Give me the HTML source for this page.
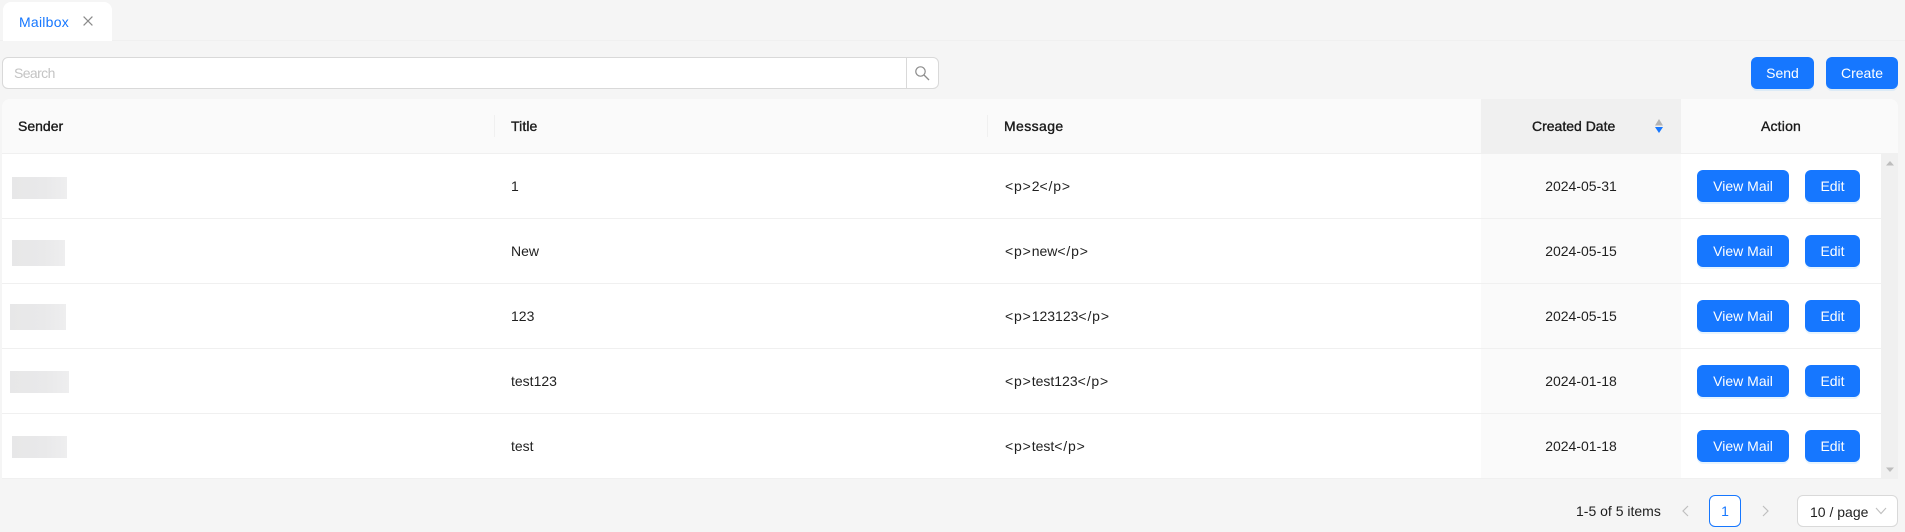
<!DOCTYPE html>
<html><head><meta charset="utf-8"><style>
html,body{margin:0;padding:0}
body{width:1905px;height:532px;position:relative;overflow:hidden;background:#f5f5f5;font-family:"Liberation Sans",sans-serif;font-size:14px;color:rgba(0,0,0,.88)}
.a{position:absolute;box-sizing:border-box}
.t{position:absolute;white-space:nowrap;line-height:22px;height:22px}
.c{transform:translateX(-50%)}
.h{-webkit-text-stroke:.35px rgba(0,0,0,.88)}
.g{letter-spacing:.85px}
.b{position:absolute;box-sizing:border-box;background:#1677ff;color:#fff;border-radius:6px;height:32px;line-height:32px;text-align:center;box-shadow:0 2px 0 rgba(5,145,255,.1)}
.bl{position:absolute;background:linear-gradient(90deg,#e7e7e8,#e9e9ea 60%,#eeeeef)}
.ln{position:absolute;left:2px;height:1px;background:#f0f0f0}
.dv{position:absolute;top:115px;width:1px;height:22px;background:#f0f0f0}
</style></head><body>
<div class="a" style="left:0;top:40px;width:1905px;height:1px;background:#f0f0f0"></div>
<div class="a" style="left:3px;top:2px;width:109px;height:39px;background:#fff;border-radius:8px 8px 0 0"></div>
<div class="t" style="left:19px;top:11px;color:#1677ff;letter-spacing:.25px">Mailbox</div>
<svg class="a" style="left:83px;top:16px" width="10" height="10" viewBox="0 0 10 10"><path d="M.6.6l8.800 8.800M9.400.6L.6 9.400" stroke="#8a8a8a" stroke-width="1.2" fill="none"/></svg>

<div class="a" style="left:2px;top:57px;width:937px;height:32px;background:#fff;border:1px solid #d9d9d9;border-radius:6px"></div>
<div class="a" style="left:906px;top:57px;width:1px;height:32px;background:#d9d9d9"></div>
<div class="t" style="left:14px;top:62px;color:#c4c4c4;letter-spacing:-.6px">Search</div>
<svg class="a" style="left:915px;top:66px" width="15" height="15" viewBox="0 0 15 15"><circle cx="5.500" cy="5.500" r="4.700" stroke="#8c8c8c" stroke-width="1.200" fill="none"/><path d="M9 9l5 5" stroke="#8c8c8c" stroke-width="1.300" fill="none"/></svg>

<div class="b" style="left:1751px;top:57px;width:63px">Send</div>
<div class="b" style="left:1826px;top:57px;width:72px">Create</div>

<div class="a" style="left:2px;top:99px;width:1896px;height:379px;background:#fff;border-radius:8px 8px 0 0;overflow:hidden">
  <div class="a" style="left:0;top:0;width:1896px;height:54px;background:#fafafa"></div>
  <div class="a" style="left:1479px;top:0;width:200px;height:54px;background:#f0f0f0"></div>
  <div class="a" style="left:1479px;top:54px;width:200px;height:325px;background:#fafafa"></div>
  <div class="a" style="left:1879px;top:54px;width:17px;height:325px;background:#f0f0f0"></div>
</div>
<div class="ln" style="top:153px;width:1896px"></div>
<div class="ln" style="top:218px;width:1879px"></div>
<div class="ln" style="top:283px;width:1879px"></div>
<div class="ln" style="top:348px;width:1879px"></div>
<div class="ln" style="top:413px;width:1879px"></div>
<div class="ln" style="top:478px;width:1896px"></div>
<div class="dv" style="left:494px"></div>
<div class="dv" style="left:987px"></div>

<div class="t h" style="left:18px;top:115px">Sender</div>
<div class="t h" style="left:511px;top:115px;letter-spacing:.1px">Title</div>
<div class="t h" style="left:1004px;top:115px;letter-spacing:.4px">Message</div>
<div class="t h" style="left:1532px;top:115px">Created Date</div>
<div class="t h c" style="left:1781px;top:115px;letter-spacing:.2px">Action</div>
<svg class="a" style="left:1654px;top:119px" width="10" height="15" viewBox="0 0 10 15"><path d="M5 0L9 6.500H1z" fill="#b3b3b3"/><path d="M5 14L9 8H1z" fill="#1677ff"/></svg>

<svg class="a" style="left:1884px;top:160px" width="12" height="7" viewBox="0 0 12 7"><path d="M6 1l4 4.500H2z" fill="#bdbdbd"/></svg>
<svg class="a" style="left:1884px;top:466px" width="12" height="7" viewBox="0 0 12 7"><path d="M6 6l4-4.500H2z" fill="#bdbdbd"/></svg>

<div class="bl" style="left:12px;top:177px;width:55px;height:22px"></div>
<div class="t" style="left:511px;top:175px">1</div>
<div class="t" style="left:1005px;top:175px"><span class="g">&lt;p&gt;</span>2<span class="g">&lt;/p&gt;</span></div>
<div class="t c" style="left:1581px;top:175px">2024-05-31</div>
<div class="b" style="left:1697px;top:170px;width:92px">View Mail</div>
<div class="b" style="left:1805px;top:170px;width:55px">Edit</div>

<div class="bl" style="left:12px;top:240px;width:53px;height:26px"></div>
<div class="t" style="left:511px;top:240px">New</div>
<div class="t" style="left:1005px;top:240px"><span class="g">&lt;p&gt;</span>new<span class="g">&lt;/p&gt;</span></div>
<div class="t c" style="left:1581px;top:240px">2024-05-15</div>
<div class="b" style="left:1697px;top:235px;width:92px">View Mail</div>
<div class="b" style="left:1805px;top:235px;width:55px">Edit</div>

<div class="bl" style="left:10px;top:304px;width:56px;height:26px"></div>
<div class="t" style="left:511px;top:305px">123</div>
<div class="t" style="left:1005px;top:305px"><span class="g">&lt;p&gt;</span>123123<span class="g">&lt;/p&gt;</span></div>
<div class="t c" style="left:1581px;top:305px">2024-05-15</div>
<div class="b" style="left:1697px;top:300px;width:92px">View Mail</div>
<div class="b" style="left:1805px;top:300px;width:55px">Edit</div>

<div class="bl" style="left:10px;top:371px;width:59px;height:22px"></div>
<div class="t" style="left:511px;top:370px">test123</div>
<div class="t" style="left:1005px;top:370px"><span class="g">&lt;p&gt;</span>test123<span class="g">&lt;/p&gt;</span></div>
<div class="t c" style="left:1581px;top:370px">2024-01-18</div>
<div class="b" style="left:1697px;top:365px;width:92px">View Mail</div>
<div class="b" style="left:1805px;top:365px;width:55px">Edit</div>

<div class="bl" style="left:12px;top:436px;width:55px;height:22px"></div>
<div class="t" style="left:511px;top:435px">test</div>
<div class="t" style="left:1005px;top:435px"><span class="g">&lt;p&gt;</span>test<span class="g">&lt;/p&gt;</span></div>
<div class="t c" style="left:1581px;top:435px">2024-01-18</div>
<div class="b" style="left:1697px;top:430px;width:92px">View Mail</div>
<div class="b" style="left:1805px;top:430px;width:55px">Edit</div>

<div class="t" style="left:1576px;top:500px">1-5 of 5 items</div>
<svg class="a" style="left:1681px;top:505px" width="9" height="12" viewBox="0 0 9 12"><path d="M7 1L2 6l5 5" stroke="#bfbfbf" stroke-width="1.200" fill="none"/></svg>
<div class="a" style="left:1709px;top:495px;width:32px;height:32px;background:#fff;border:1px solid #1677ff;border-radius:6px;text-align:center;line-height:30px;color:#1677ff">1</div>
<svg class="a" style="left:1761px;top:505px" width="9" height="12" viewBox="0 0 9 12"><path d="M2 1l5 5-5 5" stroke="#bfbfbf" stroke-width="1.200" fill="none"/></svg>
<div class="a" style="left:1797px;top:495px;width:101px;height:32px;background:#fff;border:1px solid #d9d9d9;border-radius:6px"></div>
<div class="t" style="left:1810px;top:501px">10 / page</div>
<svg class="a" style="left:1875px;top:507px" width="12" height="8" viewBox="0 0 12 8"><path d="M1 1l5 5.500L11 1" stroke="#bfbfbf" stroke-width="1.100" fill="none"/></svg>
</body></html>
